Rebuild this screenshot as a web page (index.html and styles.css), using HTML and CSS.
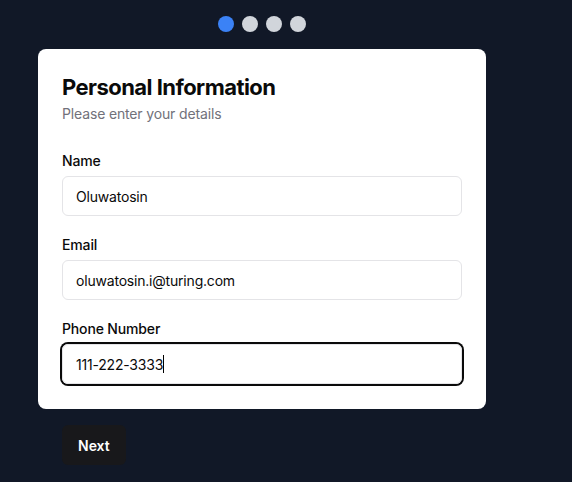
FILE: index.html
```html
<!DOCTYPE html>
<html>
<head>
<meta charset="utf-8">
<link rel="stylesheet" href="styles.css">
</head>
<body>
<div class="page">
  <div class="steps">
    <span class="dot active"></span>
    <span class="dot"></span>
    <span class="dot"></span>
    <span class="dot"></span>
  </div>
  <div class="card">
    <h1 class="title">Personal Information</h1>
    <p class="subtitle">Please enter your details</p>
    <div class="fields">
      <div class="field">
        <label class="label">Name</label>
        <div class="input">Oluwatosin</div>
      </div>
      <div class="field">
        <label class="label">Email</label>
        <div class="input">oluwatosin.i@turing.com</div>
      </div>
      <div class="field">
        <label class="label">Phone Number</label>
        <div class="input focused">111-222-3333<span class="caret"></span></div>
      </div>
    </div>
  </div>
  <div class="actions">
    <button class="btn">Next</button>
  </div>
</div>
</body>
</html>
```
FILE: styles.css
```css
html, body {
  margin: 0;
  padding: 0;
  background: #111827;
  font-family: Inter, "Liberation Sans", sans-serif;
  height: 100%;
}
.page {
  width: 448px;
  padding: 16px 0 0 38px;
}
.steps {
  display: flex;
  justify-content: center;
  gap: 8px;
}
.dot {
  width: 16px;
  height: 16px;
  border-radius: 50%;
  background: #d1d5db;
}
.dot.active {
  background: #3b82f6;
}
.card {
  margin-top: 17px;
  background: #fff;
  border-radius: 8px;
  padding: 24px 24px 25px;
}
.title {
  margin: 0;
  font-size: 22px;
  line-height: 28px;
  font-weight: 700;
  color: #0a0a0a;
  letter-spacing: -0.55px;
}
.subtitle {
  margin: 3px 0 0;
  font-size: 14px;
  line-height: 20px;
  color: #71717a;
  letter-spacing: -0.15px;
}
.fields {
  margin-top: 30px;
  display: flex;
  flex-direction: column;
  gap: 22px;
}
.field {
  display: flex;
  flex-direction: column;
  gap: 8px;
}
.label {
  font-size: 14px;
  line-height: 14px;
  font-weight: 500;
  color: #0a0a0a;
  letter-spacing: -0.15px;
}
.input {
  height: 40px;
  box-sizing: border-box;
  border: 1px solid #e4e4e7;
  border-radius: 6px;
  padding: 0 13px;
  display: flex;
  align-items: center;
  font-size: 14px;
  color: #0a0a0a;
  letter-spacing: -0.2px;
}
.input.focused {
  box-shadow: 0 0 0 2px #0a0a0a;
}
.caret {
  display: inline-block;
  width: 1px;
  height: 18px;
  background: #000;
}
.actions {
  margin-top: 16px;
  padding-left: 24px;
}
.btn {
  height: 40px;
  padding: 0 16px;
  border: none;
  border-radius: 6px;
  background: #18181b;
  color: #fff;
  font-family: Inter, "Liberation Sans", sans-serif;
  font-size: 14px;
  font-weight: 600;
}
```
